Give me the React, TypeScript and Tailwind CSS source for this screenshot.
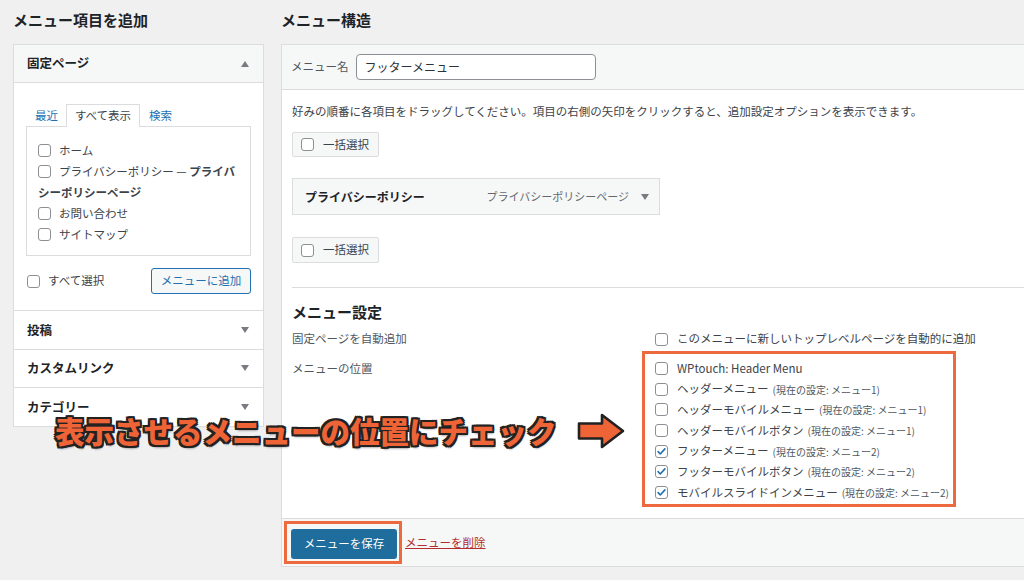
import React from 'react'

function Check({ on = false }: { on?: boolean }) {
  return (
    <span className="inline-flex h-[13px] w-[13px] shrink-0 items-center justify-center rounded-[3px] border border-[#8c8f94] bg-white">
      {on && (
        <svg viewBox="0 0 12 12" className="h-[11px] w-[11px]">
          <path d="M2.3 6.2l2.4 2.5 5-5.6" fill="none" stroke="#2271b1" strokeWidth="1.8" strokeLinecap="round" strokeLinejoin="round" />
        </svg>
      )}
    </span>
  )
}

function Tri({ up = false }: { up?: boolean }) {
  return (
    <svg viewBox="0 0 8 6" className="h-[6px] w-[8px]">
      <path d={up ? 'M0 6L4 0L8 6Z' : 'M0 0L8 0L4 6Z'} fill="#787c82" />
    </svg>
  )
}

const locations = [
  { name: 'WPtouch: Header Menu', note: '', on: false },
  { name: 'ヘッダーメニュー', note: '(現在の設定: メニュー1)', on: false },
  { name: 'ヘッダーモバイルメニュー', note: '(現在の設定: メニュー1)', on: false },
  { name: 'ヘッダーモバイルボタン', note: '(現在の設定: メニュー1)', on: false },
  { name: 'フッターメニュー', note: '(現在の設定: メニュー2)', on: true },
  { name: 'フッターモバイルボタン', note: '(現在の設定: メニュー2)', on: true },
  { name: 'モバイルスライドインメニュー', note: '(現在の設定: メニュー2)', on: true },
]

const sections = ['投稿', 'カスタムリンク', 'カテゴリー']

export default function App() {
  return (
    <div className="relative flex h-[580px] w-[1024px] items-start overflow-hidden bg-[#f0f0f1] font-['Noto_Sans_CJK_JP','Noto_Sans',sans-serif] text-[#3c434a]">
      {/* 左: メニュー項目を追加 */}
      <div className="ml-[13px] w-[251px] shrink-0">
        <h2 className="mt-[10px] mb-[14px] h-[20px] text-[15px] font-bold leading-[20px] text-[#1d2327]">メニュー項目を追加</h2>
        <div className="border border-[#dcdcde] bg-white">
          <div className="flex h-[38px] items-center justify-between border-b border-[#dcdcde] bg-[#f6f7f7] pl-[13px] pr-[14px]">
            <span className="text-[12.5px] font-bold text-[#1d2327]">固定ページ</span>
            <Tri up />
          </div>
          <div className="px-[12px] pt-[21px] pb-[16px]">
            <div className="-mb-px flex h-[23px] items-end text-[11.5px]">
              <span className="w-[40px] pb-[3px] pl-[9px] text-[#2271b1]">最近</span>
              <span className="relative flex h-[23px] w-[74px] items-center justify-center border border-b-0 border-[#dcdcde] bg-white text-[#3c434a]">すべて表示</span>
              <span className="ml-[9px] pb-[3px] text-[#2271b1]">検索</span>
            </div>
            <div className="h-[130px] border border-[#dcdcde] pt-[13px] pl-[11px] text-[11.5px] leading-[21px]">
              <div className="flex h-[21px] items-center"><Check /><span className="ml-[8px]">ホーム</span></div>
              <div className="flex h-[21px] items-center">
                <Check />
                <span className="ml-[8px]">プライバシーポリシー — <b className="font-bold">プライバ</b></span>
              </div>
              <div className="h-[21px] font-bold">シーポリシーページ</div>
              <div className="flex h-[21px] items-center"><Check /><span className="ml-[8px]">お問い合わせ</span></div>
              <div className="flex h-[21px] items-center"><Check /><span className="ml-[8px]">サイトマップ</span></div>
            </div>
            <div className="mt-[12px] flex h-[26px] items-center justify-between pl-[1px]">
              <div className="flex items-center text-[11.5px]">
                <Check />
                <span className="ml-[8px]">すべて選択</span>
              </div>
              <button className="h-[26px] w-[100px] rounded-[3px] border border-[#2271b1] bg-[#f6f7f7] text-[11.5px] text-[#2271b1]">メニューに追加</button>
            </div>
          </div>
          {sections.map(s => (
            <div key={s} className="flex h-[38.5px] items-center justify-between border-t border-[#dcdcde] pl-[13px] pr-[14px]">
              <span className="text-[12.5px] font-bold leading-[14px] text-[#1d2327]">{s}</span>
              <Tri />
            </div>
          ))}
        </div>
      </div>

      {/* 右: メニュー構造 */}
      <div className="ml-[17px] w-[760px] shrink-0">
        <h2 className="mt-[10px] mb-[14px] h-[20px] text-[15px] font-bold leading-[20px] text-[#1d2327]">メニュー構造</h2>
        <div className="border border-[#dcdcde] bg-white">
          <div className="flex h-[45px] items-center border-b border-[#dcdcde] bg-[#f6f7f7] pl-[9px]">
            <span className="text-[11.5px] text-[#50575e]">メニュー名</span>
            <div className="ml-[7px] flex h-[26px] w-[240px] items-center rounded-[4px] border border-[#8c8f94] bg-white px-[8px] text-[12px] text-[#2c3338]">フッターメニュー</div>
          </div>

          <div className="flex h-[428px] flex-col px-[10px]">
            <p className="mt-[12px] text-[11.5px] leading-[18px] text-[#3c434a]">好みの順番に各項目をドラッグしてください。項目の右側の矢印をクリックすると、追加設定オプションを表示できます。</p>

            <div className="mt-[12px] flex h-[25px] w-[87px] items-center rounded-[2px] border border-[#dcdcde] bg-[#f6f7f7] pl-[8px] text-[11.5px]">
              <Check />
              <span className="ml-[9px]">一括選択</span>
            </div>

            <div className="mt-[21px] flex h-[37px] w-[368px] items-center border border-[#dcdcde] bg-[#f6f7f7] pl-[12px] pr-[10px]">
              <span className="text-[12px] font-bold text-[#1d2327]">プライバシーポリシー</span>
              <span className="ml-auto text-[11px] text-[#646970]">プライバシーポリシーページ</span>
              <span className="ml-[12px]"><Tri /></span>
            </div>

            <div className="mt-[22px] flex h-[26px] w-[87px] items-center rounded-[2px] border border-[#dcdcde] bg-[#f6f7f7] pl-[8px] text-[11.5px]">
              <Check />
              <span className="ml-[9px]">一括選択</span>
            </div>

            <div className="mt-[24px] border-t border-[#dcdcde]" />

            <h3 className="mt-[14px] h-[20px] text-[15px] font-bold leading-[20px] text-[#1d2327]">メニュー設定</h3>

            <div className="mt-[8px] flex h-[18px] items-center text-[11.5px]">
              <span className="w-[363px] text-[#50575e]">固定ページを自動追加</span>
              <Check />
              <span className="ml-[9px]">このメニューに新しいトップレベルページを自動的に追加</span>
            </div>

            <div className="mt-[3px] flex items-start text-[11.5px]">
              <span className="w-[350px] pt-[8px] leading-[18px] text-[#50575e]">メニューの位置</span>
              <div className="w-[314px] border-[3px] border-[#ec6a3d] pt-[4px] pb-[1px] pl-[10px]">
                {locations.map(l => (
                  <div key={l.name} className="flex h-[20.7px] items-center">
                    <Check on={l.on} />
                    <span className="ml-[9px] text-[11.5px]">{l.name}</span>
                    {l.note && <span className="ml-[4px] text-[10px] text-[#50575e]">{l.note}</span>}
                  </div>
                ))}
              </div>
            </div>
          </div>

          <div className="flex h-[48px] items-center border-t border-[#dcdcde] bg-[#f6f7f7] pl-[2px]">
            <div className="border-[3px] border-[#ec6a3d] pt-[5px] pb-[2px] pl-[4px] pr-[2px]">
              <button className="h-[30px] w-[106px] rounded-[3px] bg-[#1f6d9c] text-[11.5px] text-white">メニューを保存</button>
            </div>
            <a className="ml-[3px] text-[11.5px] text-[#b32d2e] underline">メニューを削除</a>
          </div>
        </div>
      </div>

      {/* 注釈 */}
      <div className="absolute left-[55px] top-[416px] text-[29.5px] font-black leading-[29px] text-[#ee6436] [text-shadow:2px_0_0_#222,-2px_0_0_#222,0_2px_0_#222,0_-2px_0_#222,2px_2px_0_#222,-2px_-2px_0_#222,2px_-2px_0_#222,-2px_2px_0_#222,1px_3px_2px_rgba(0,0,0,0.3)]">
        表示させるメニューの位置にチェック
      </div>
      <svg viewBox="0 0 48 36" className="absolute left-[577px] top-[413px] h-[36px] w-[48px]">
        <path d="M2 10.5H25V2L46 18L25 34V25.5H2Z" fill="#ee6436" stroke="#222" strokeWidth="2.6" strokeLinejoin="round" />
      </svg>
    </div>
  )
}
